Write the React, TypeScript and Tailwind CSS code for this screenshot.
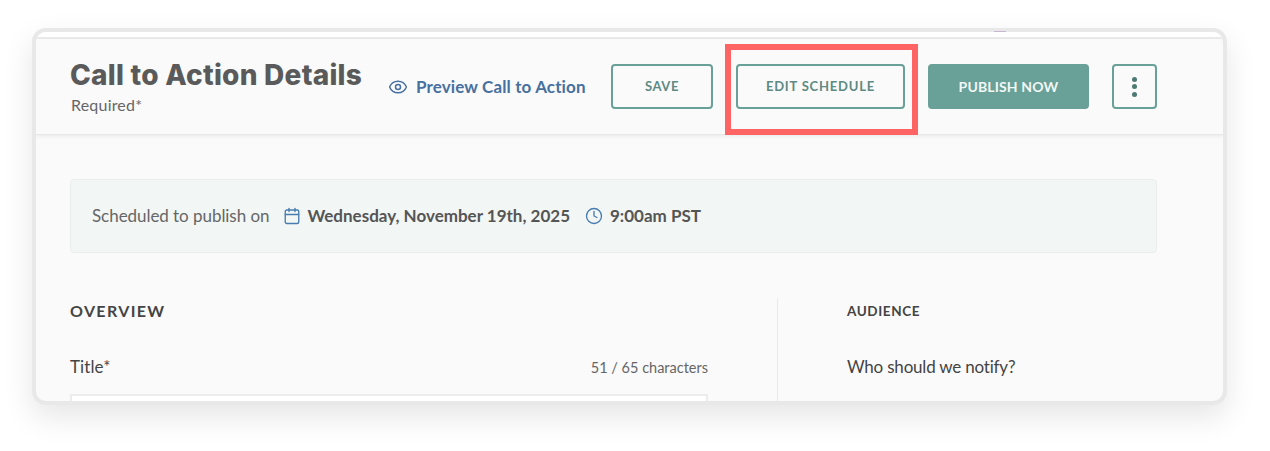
import { Eye, Calendar, Clock } from "lucide-react";

export default function App() {
  return (
    <div className="relative w-[1270px] h-[451px] bg-white overflow-hidden font-['Lato',sans-serif]">
      <div className="ml-[32px] mt-[28px] w-[1195px] h-[377px] border-4 border-[#e8e8e8] rounded-[14px] bg-[#fafafa] overflow-hidden shadow-[0_12px_30px_rgba(0,0,0,0.1)] relative">
        <div className="h-[7px] bg-white border-b-2 border-[#ececec]" />
        <div className="h-[96px] flex items-center pl-[34px] border-b border-[#e8e8e8] shadow-[0_1px_4px_rgba(0,0,0,0.08)] relative">
          <div className="w-[319px] shrink-0">
            <div className="font-['Inter',sans-serif] font-extrabold text-[28px] leading-[32px] tracking-[0.25px] text-[#5a5a5a]">Call to Action Details</div>
            <div className="text-[16px] leading-[20px] tracking-[0.2px] text-[#666] mt-[4px] ml-[1px]">Required*</div>
          </div>
          <div className="flex items-center gap-[8px] w-[222px] shrink-0 text-[#47709f] -ml-[1px] mr-[1px]">
            <Eye size={20} strokeWidth={1.8} />
            <span className="font-bold text-[17px] tracking-[0.13px]">Preview Call to Action</span>
          </div>
          <button className="w-[102px] h-[45px] border-2 border-[#69a097] rounded-[4px] text-[13px] font-bold tracking-[0.6px] text-[#5d8a83]">SAVE</button>
          <button className="ml-[23px] w-[169px] h-[45px] border-2 border-[#69a097] rounded-[4px] text-[13px] font-bold tracking-[0.8px] text-[#5d8a83]">EDIT SCHEDULE</button>
          <button className="ml-[23px] w-[161px] h-[45px] bg-[#69a097] rounded-[4px] text-[14px] font-bold tracking-[0.15px] text-[#f2f7f6]">PUBLISH NOW</button>
          <button className="ml-[23px] w-[45px] h-[45px] border-2 border-[#69a097] rounded-[4px] flex flex-col items-center justify-center gap-[2.5px]">
            <span className="w-[5px] h-[5px] rounded-full bg-[#4d7a73]" />
            <span className="w-[5px] h-[5px] rounded-full bg-[#4d7a73]" />
            <span className="w-[5px] h-[5px] rounded-full bg-[#4d7a73]" />
          </button>
        </div>
        <div className="pl-[34px] pr-[66px] pt-[44px]">
          <div className="h-[74px] bg-[#f2f6f5] border border-[#e9eeec] rounded-[4px] flex items-center pl-[21px] text-[17px]">
            <span className="text-[#666] tracking-[-0.05px]">Scheduled to publish on</span>
            <Calendar className="ml-[14px] text-[#4a7cb0]" size={18} strokeWidth={1.8} />
            <span className="ml-[6px] font-bold text-[#555]">Wednesday, November 19th, 2025</span>
            <Clock className="ml-[15px] text-[#4a7cb0]" size={18} strokeWidth={1.8} />
            <span className="ml-[7px] font-bold text-[#555]">9:00am PST</span>
          </div>
          <div className="flex mt-[45px]">
            <div className="w-[638px] shrink-0 pt-[3px]">
              <div className="text-[16px] leading-[20px] font-bold tracking-[1.35px] text-[#444]">OVERVIEW</div>
              <div className="flex justify-between items-end mt-[36px]">
                <span className="text-[17px] leading-[20px] tracking-[0.1px] text-[#444]">Title*</span>
                <span className="text-[14.5px] leading-[18px] text-[#666]">51 / 65 characters</span>
              </div>
              <div className="mt-[17px] h-[40px] bg-white border-2 border-[#ececec]" />
            </div>
            <div className="ml-[69px] w-px h-[120px] bg-[#e9e9e9] shrink-0" />
            <div className="pl-[69px] pt-[3px]">
              <div className="text-[13.5px] leading-[20px] font-bold tracking-[0.6px] text-[#444]">AUDIENCE</div>
              <div className="text-[17px] leading-[20px] tracking-[-0.2px] text-[#444] mt-[36px]">Who should we notify?</div>
            </div>
          </div>
        </div>
      </div>
      <div className="absolute left-[994px] top-[31px] w-[12px] h-[1px] bg-[#c9b5cf]" />
      <div className="absolute left-[725px] top-[44px] w-[193px] h-[91px] border-[6px] border-[#ff6464]" />
    </div>
  );
}
